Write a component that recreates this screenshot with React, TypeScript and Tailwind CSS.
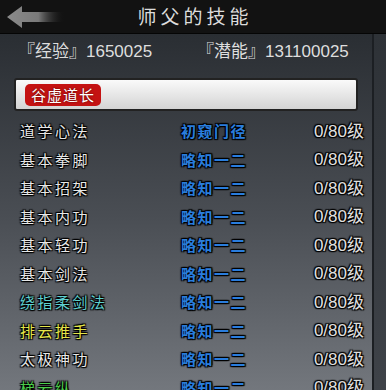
const skills = [
  { name: "道学心法", color: "text-[#e8e8e8]", level: "初窥门径" },
  { name: "基本拳脚", color: "text-[#e8e8e8]", level: "略知一二" },
  { name: "基本招架", color: "text-[#e8e8e8]", level: "略知一二" },
  { name: "基本内功", color: "text-[#e8e8e8]", level: "略知一二" },
  { name: "基本轻功", color: "text-[#e8e8e8]", level: "略知一二" },
  { name: "基本剑法", color: "text-[#e8e8e8]", level: "略知一二" },
  { name: "绕指柔剑法", color: "text-[#5fd0d0]", level: "略知一二" },
  { name: "排云推手", color: "text-[#e6e64a]", level: "略知一二" },
  { name: "太极神功", color: "text-[#e8e8e8]", level: "略知一二" },
  { name: "梯云纵", color: "text-[#4ccc4c]", level: "略知一二" },
];

const outline = "[text-shadow:0_0_2px_#000,1px_1px_1px_#000,-1px_-1px_1px_#000,1px_-1px_1px_#000,-1px_1px_1px_#000]";

const BackArrow = () => (
  <svg width="58" height="24" viewBox="0 0 58 24">
    <defs>
      <linearGradient id="ag" x1="0" x2="1" y1="0" y2="0">
        <stop offset="0" stopColor="#8a8a8a" />
        <stop offset="0.55" stopColor="#7a7a7a" />
        <stop offset="1" stopColor="#1a1a1a" stopOpacity="0" />
      </linearGradient>
    </defs>
    <path d="M1 12 L16 1 L16 7 L58 7 L58 17 L16 17 L16 23 Z" fill="url(#ag)" />
  </svg>
);

const App = () => {
  return (
    <div className="w-[386px] h-[390px] overflow-hidden flex flex-col bg-[#2b2f34] font-['Liberation_Sans','Noto_Sans_CJK_SC',sans-serif]">
      <div className="relative h-[34px] shrink-0 bg-[#121212] border-b border-[#050505] flex items-center justify-center">
        <div className="absolute left-[6px] top-[5px]">
          <BackArrow />
        </div>
        <span className="text-[#dcdcdc] text-[19px] tracking-[4px] font-['Noto_Sans_CJK_SC',sans-serif] pl-[4px]">师父的技能</span>
      </div>
      <div className="flex-1 flex bg-gradient-to-b from-[#2a2e33] via-[#4a4e54] to-[#767a80]">
        <div className="flex-1 flex flex-col border-r-2 border-[#1c1f23]">
          <div className="h-[36px] flex items-center text-[17px] text-[#dedede]">
            <span className="w-[197px] pl-[18px]">『经验』1650025</span>
            <span>『潜能』131100025</span>
          </div>
          <div className="mx-[14px] mt-[8px] h-[33px] rounded-[3px] border-2 border-[#222] bg-gradient-to-b from-[#fafafa] to-[#d4d4d4] flex items-center px-[9px]">
            <span className="h-[22px] px-[6px] rounded-[5px] bg-[#c41212] text-white text-[15px] leading-[22px] tracking-[1px] font-['Noto_Sans_CJK_SC',sans-serif] [text-shadow:0_0_2px_#400]">谷虚道长</span>
          </div>
          <div className="flex flex-col mt-[6px]">
            {skills.map((s) => (
              <div key={s.name} className="h-[28.5px] shrink-0 flex items-center">
                <span className={`w-[181px] pl-[20px] text-[15px] tracking-[2.5px] font-['Noto_Sans_CJK_SC',sans-serif] ${s.color} ${outline}`}>{s.name}</span>
                <span className={`flex-1 text-[15px] tracking-[1.5px] text-[#2a7ddc] font-bold font-['Noto_Sans_CJK_SC',sans-serif] ${outline}`}>{s.level}</span>
                <span className={`pr-[8px] text-[17px] text-[#e0e0e0] ${outline}`}>0/80级</span>
              </div>
            ))}
          </div>
        </div>
        <div className="w-[12px] bg-gradient-to-b from-[#2e3237] to-[#3f4349]" />
      </div>
    </div>
  );
};

export default App;
